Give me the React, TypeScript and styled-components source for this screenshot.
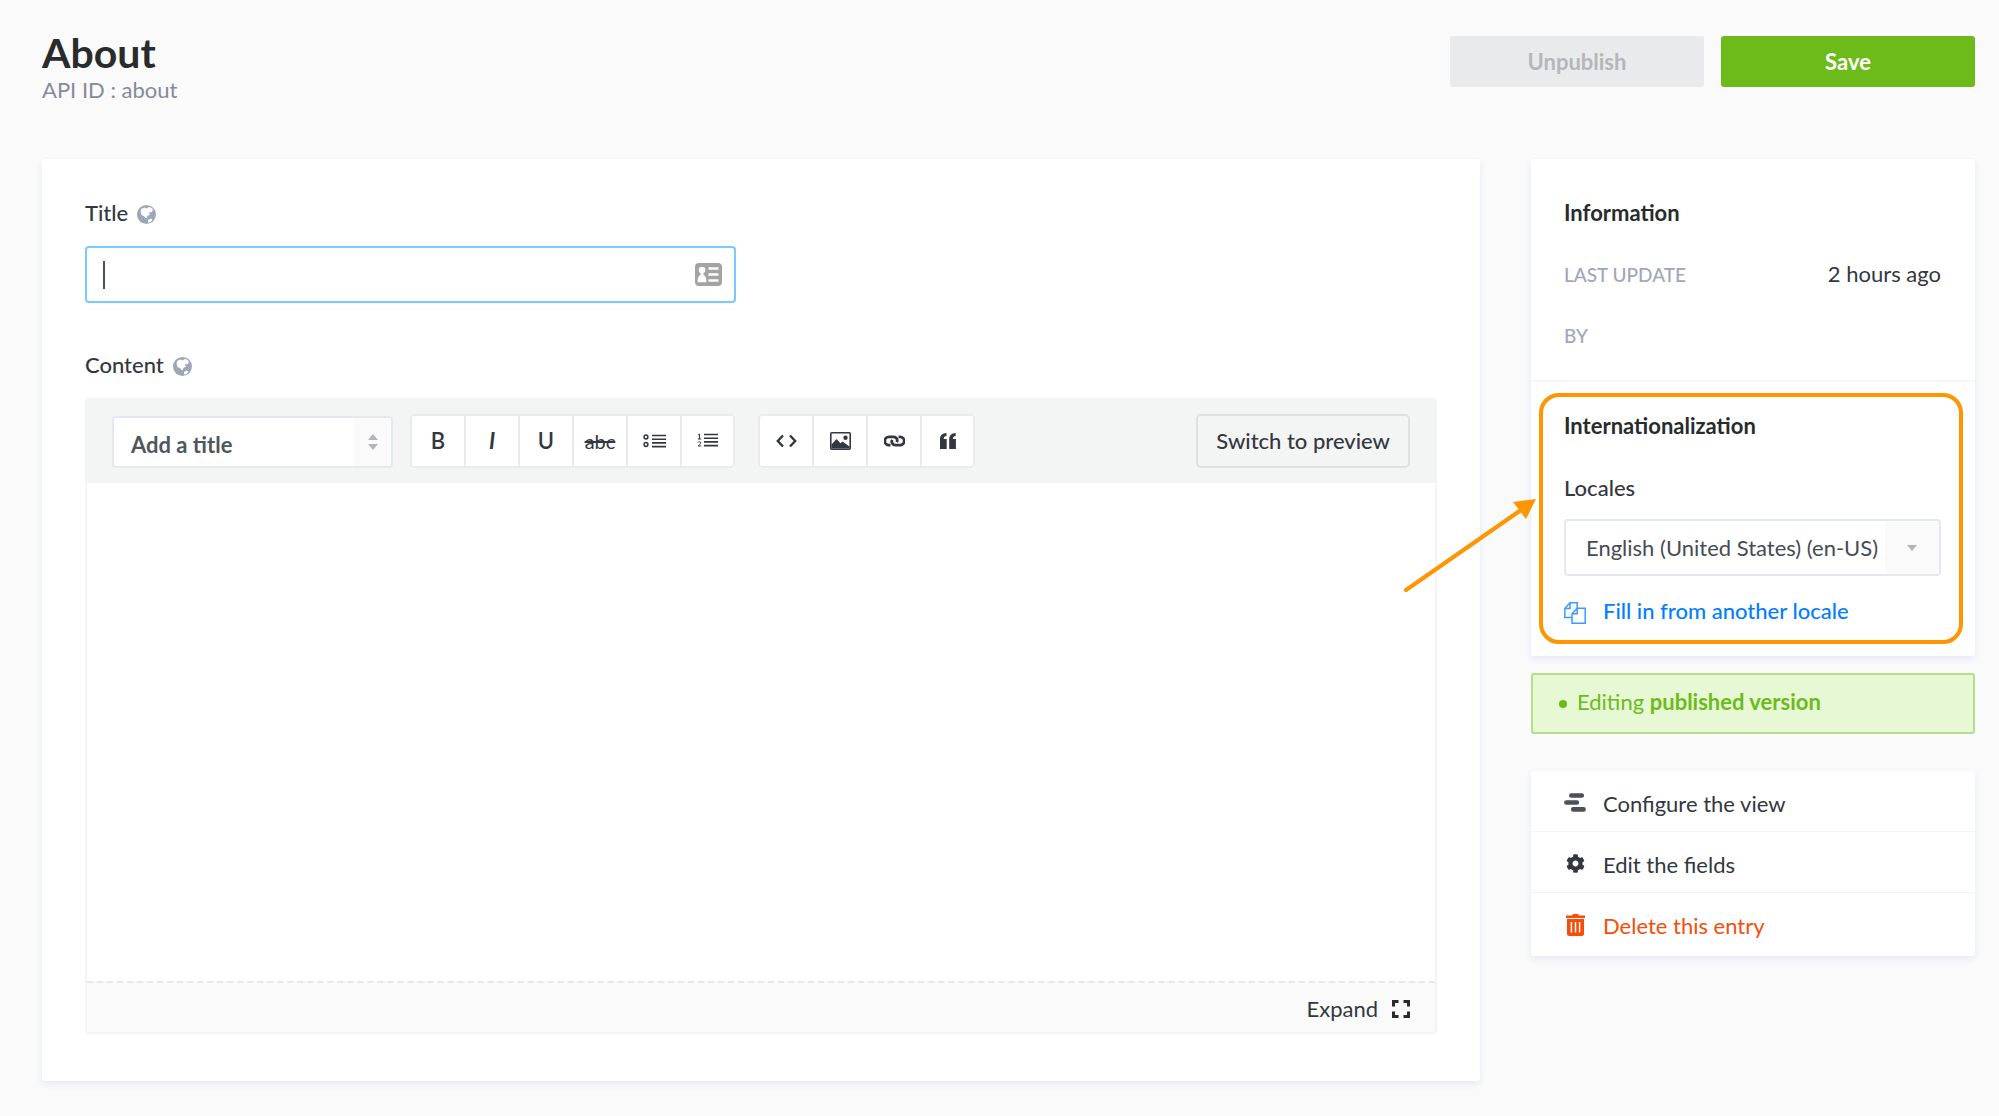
import React from "react";
import styled, { createGlobalStyle } from "styled-components";
import { FaCog } from "react-icons/fa";

const GlobalStyle = createGlobalStyle`
  *, *::before, *::after { box-sizing: border-box; }
  body {
    margin: 0;
    background: #fafafb;
    color: #333740;
    font-family: Lato, "Open Sans", sans-serif;
    font-size: 22px;
    line-height: 26px;
  }
  button, input, select, textarea { font: inherit; color: inherit; margin: 0; }
  h1, h2, p, ul, dl, dd { margin: 0; padding: 0; }
  svg { display: block; }
`;

const Page = styled.div`
  padding: 29px 24px 35px 42px;
`;

const Header = styled.header`
  display: flex;
  align-items: flex-start;
  justify-content: space-between;
`;

const PageTitle = styled.h1`
  font-size: 41px;
  line-height: 48px;
  font-weight: 700;
  color: #292b2c;
`;

const Subtitle = styled.p`
  color: #858b9a;
`;

const Actions = styled.div`
  display: flex;
  gap: 17px;
  padding-top: 7px;
`;

const ActionButton = styled.button<{ $primary?: boolean }>`
  width: 254px;
  height: 51px;
  border: 0;
  border-radius: 3px;
  font-weight: 700;
  color: ${(p) => (p.$primary ? "#ffffff" : "#b4b6ba")};
  background: ${(p) => (p.$primary ? "#6dbb1a" : "#e9eaeb")};
`;

const Columns = styled.div`
  display: grid;
  grid-template-columns: minmax(0, 1fr) 444px;
  gap: 51px;
  align-items: start;
  margin-top: 56px;
`;

const Card = styled.section`
  background: #ffffff;
  border-radius: 3px;
  box-shadow: 0 3px 7px #e3e9f3;
`;

const FormCard = styled(Card)`
  display: flex;
  flex-direction: column;
  gap: 49px;
  padding: 41px 43px 47px;
`;

const FieldRow = styled.div`
  display: grid;
  grid-template-columns: 1fr 1fr;
  column-gap: 51px;
`;

const Field = styled.div`
  display: flex;
  flex-direction: column;
  gap: 20px;
`;

const FieldLabel = styled.label`
  display: flex;
  align-items: center;
  gap: 9px;
  font-weight: 500;

  svg { margin-top: 3px; }
`;

const InputBox = styled.div`
  display: flex;
  align-items: center;
  height: 57px;
  padding: 0 12px 0 16px;
  border: 2px solid #78caff;
  border-radius: 4px;
`;

const TextInput = styled.input`
  flex: 1;
  min-width: 0;
  height: 100%;
  padding: 0;
  border: 0;
  outline: 0;
  background: transparent;
  caret-color: transparent;
`;

const Caret = styled.span`
  width: 2px;
  height: 28px;
  background: #4b515a;
`;

const Editor = styled.div`
  border: 2px solid #f3f4f4;
  border-radius: 4px;
  overflow: hidden;
`;

const Toolbar = styled.div`
  display: flex;
  align-items: flex-start;
  height: 83px;
  padding: 14px 25px 0;
  background: #f3f4f4;
`;

const SelectBox = styled.div<{ $wide?: boolean }>`
  position: relative;
  display: flex;
  height: ${(p) => (p.$wide ? "57px" : "52px")};
  width: ${(p) => (p.$wide ? "100%" : "281px")};
  margin-top: ${(p) => (p.$wide ? "0" : "2px")};
  border: 2px solid #e3e9f3;
  border-radius: 4px;
  background: #ffffff;
  overflow: hidden;
`;

const Select = styled.select<{ $wide?: boolean }>`
  appearance: none;
  width: 100%;
  border: 0;
  outline: 0;
  background: transparent;
  padding: ${(p) => (p.$wide ? "0 56px 0 20px" : "6px 40px 0 17px")};
  font-weight: ${(p) => (p.$wide ? 400 : 700)};
  color: ${(p) => (p.$wide ? "#464b55" : "#50565e")};
`;

const Arrows = styled.span<{ $wide?: boolean }>`
  position: absolute;
  inset: 0 0 0 auto;
  width: ${(p) => (p.$wide ? "54px" : "37px")};
  display: flex;
  flex-direction: column;
  align-items: center;
  justify-content: center;
  gap: 4px;
  background: #fafafb;
  color: #b3b5b9;
  pointer-events: none;
`;

const ButtonGroup = styled.div`
  display: flex;
  height: 54px;
  margin-left: 17px;
  border: 2px solid #e9eaea;
  border-radius: 5px;
  background: #ffffff;
  overflow: hidden;

  & + & { margin-left: 23px; }
`;

const ToolButton = styled.button`
  display: flex;
  align-items: center;
  justify-content: center;
  width: 54px;
  padding: 0;
  border: 0;
  border-right: 2px solid #e9eaea;
  background: #ffffff;
  font-weight: 600;

  &:last-child { border-right: 0; width: 51px; }
`;

const Strike = styled.s`
  font-size: 20px;
  font-weight: 400;
  text-decoration-thickness: 2px;
`;

const Italic = styled.i`
  font-weight: 700;
`;

const PreviewButton = styled.button`
  height: 54px;
  margin-left: auto;
  padding: 0 18px;
  border: 2px solid #dfe0e1;
  border-radius: 5px;
  background: transparent;
  font-weight: 500;
  color: #333740;
`;

const EditorArea = styled.textarea`
  display: block;
  width: 100%;
  height: 498px;
  padding: 20px;
  border: 0;
  outline: 0;
  resize: none;
`;

const EditorFooter = styled.div`
  display: flex;
  justify-content: flex-end;
  height: 51px;
  padding: 2px 25px 0;
  border-top: 2px dashed #e6e7e8;
  background: #fafafb;
`;

const ExpandButton = styled.button`
  display: flex;
  align-items: center;
  gap: 14px;
  padding: 0;
  border: 0;
  background: none;
`;

const Sidebar = styled.aside`
  display: flex;
  flex-direction: column;
`;

const PanelSection = styled.div<{ $divided?: boolean }>`
  position: relative;
  display: flex;
  flex-direction: column;
  gap: ${(p) => (p.$divided ? "36px" : "35px")};
  padding: ${(p) => (p.$divided ? "31px 34px 32px 33px" : "41px 34px 32px 33px")};
  border-top: ${(p) => (p.$divided ? "2px solid #f6f6f6" : "0")};
`;

const PanelTitle = styled.h2`
  font-size: 22px;
  line-height: 26px;
  font-weight: 700;
  color: #292b2c;
`;

const Details = styled.dl`
  display: flex;
  flex-direction: column;
  gap: 35px;
`;

const Detail = styled.div`
  display: flex;
  justify-content: space-between;
  height: 26px;
`;

const DetailName = styled.dt`
  font-size: 19px;
  font-weight: 500;
  line-height: 28px;
  color: #9ea7b8;
`;

const LocaleField = styled.div`
  display: flex;
  flex-direction: column;
  gap: 18px;
`;

const FillButton = styled.button`
  display: flex;
  align-items: center;
  gap: 17px;
  margin-top: 4px;
  padding: 0;
  border: 0;
  background: none;
  font-weight: 500;
  color: #007eff;

  svg { margin-top: 3px; }
`;

const Highlight = styled.div`
  position: absolute;
  inset: 11px 12px 12px 8px;
  border: 4px solid #ff9500;
  border-radius: 20px;
  pointer-events: none;
`;

const Pointer = styled.svg`
  position: absolute;
  right: 100%;
  top: 115px;
  margin-right: -6px;
  pointer-events: none;
`;

const Status = styled.p`
  display: flex;
  align-items: center;
  gap: 10px;
  height: 61px;
  margin-top: 17px;
  padding: 0 26px 3px;
  border: 2px solid #b5dd90;
  border-radius: 3px;
  background: #e6f8d4;
  color: #6dbb1a;

  &::before {
    content: "";
    width: 8px;
    height: 8px;
    margin-top: 3px;
    border-radius: 50%;
    background: #6dbb1a;
  }
`;

const LinkList = styled.ul`
  margin-top: 37px;
  padding: 0 0 2px;
  list-style: none;
  background: #ffffff;
  border-radius: 3px;
  box-shadow: 0 3px 7px #e3e9f3;
`;

const LinkItem = styled.li`
  height: 61px;
  border-bottom: 1px solid #f3f4f5;

  &:last-child { border-bottom: 0; }
`;

const SideLink = styled.a<{ $danger?: boolean }>`
  display: flex;
  align-items: center;
  gap: 17px;
  height: 60px;
  padding: 6px 34px 0 33px;
  text-decoration: none;
  color: ${(p) => (p.$danger ? "#f64d0a" : "#333740")};
`;

const IconSlot = styled.span`
  display: flex;
  justify-content: center;
  width: 22px;
  margin-top: -3px;
`;

const GlobeIcon = () => (
  <svg width="19" height="19" viewBox="0 0 19 19">
    <circle cx="9.5" cy="9.5" r="9.500" fill="#9ea7b8" />
    <path d="M4.200 4L7.500 2.400l2.400 1.200 2.200-1.800 3.800 2.300-.8 2.800-3.600.7 1.700 2-2.600 1.200-1.300 2.600-2.200-2.200-2.600-1.200-.9-3z" fill="#fff" />
    <path d="M11 14.800l3.300-1.300 1 1.800-2.200 1.900-2.100.3z" fill="#fff" />
  </svg>
);

const CardIcon = () => (
  <svg width="27" height="23" viewBox="0 0 27 23">
    <rect width="27" height="23" rx="4" fill="#a3a3a3" />
    <circle cx="7" cy="7" r="3.3" fill="#fff" />
    <path d="M5.600 9h2.800v3c2 .8 3 2.600 3 7.200H2.600c0-4.600 1-6.400 3-7.200z" fill="#fff" />
    <path d="M13.500 5.500h10M13.500 11.500h10M13.500 17.500h10" stroke="#fff" strokeWidth="2.600" />
  </svg>
);

const BulletIcon = () => (
  <svg width="23" height="14" viewBox="0 0 23 14" fill="none" stroke="#333740">
    <circle cx="3" cy="3" r="1.900" strokeWidth="1.500" />
    <circle cx="3" cy="10.500" r="1.900" strokeWidth="1.500" />
    <path d="M9 1.500h14M9 5.200h14M9 8.900h14M9 12.600h14" strokeWidth="1.600" />
  </svg>
);

const NumberIcon = () => (
  <svg width="21" height="16" viewBox="0 0 21 16" fill="none" stroke="#333740">
    <path d="M1 2l1.500-.9v4.900M.8 6h3.400" strokeWidth="1" />
    <path d="M.8 9.600c.5-1.300 2.900-1.200 2.900.3 0 1.100-1.700 1.900-2.700 3.100h3.200" strokeWidth="1" />
    <path d="M7 1.500h14M7 5.200h14M7 8.900h14M7 12.600h14" strokeWidth="1.600" />
  </svg>
);

const CodeIcon = () => (
  <svg width="21" height="14" viewBox="0 0 21 14" fill="none" stroke="#333740" strokeWidth="2.400">
    <path d="M7 1.500L1.800 7 7 12.500M14 1.500L19.200 7 14 12.500" />
  </svg>
);

const ImageIcon = () => (
  <svg width="21" height="18" viewBox="0 0 21 18">
    <rect x=".8" y=".8" width="19.400" height="16.400" rx="1" fill="none" stroke="#333740" strokeWidth="1.600" />
    <circle cx="15.500" cy="5.700" r="2.200" fill="#333740" />
    <path d="M1.500 16.500v-4L6.500 7l4 4.200 2-1.700 7 5v2z" fill="#333740" />
  </svg>
);

const ChainIcon = () => (
  <svg width="21" height="12" viewBox="0 0 21 12" fill="none" stroke="#333740" strokeWidth="2.800">
    <path d="M6.500 10.200H5A3.900 3.900 0 0 1 5 1.800h4.500a3.700 3.700 0 0 1 3.300 5.400" />
    <path d="M14.500 1.800H16a3.900 3.900 0 0 1 0 8.400h-4.500a3.700 3.700 0 0 1-3.300-5.400" />
  </svg>
);

const QuoteIcon = () => (
  <svg width="16" height="16" viewBox="0 0 16 16" fill="#333740">
    <path d="M0 16V6.500C0 2.500 2 .3 6.500 0v3C4.500 3.300 3.700 4.200 3.700 6h3v10z" />
    <path d="M9.200 16V6.500c0-4 2-6.200 6.500-6.500v3c-2 .3-2.800 1.200-2.800 3h3v10z" />
  </svg>
);

const ExpandIcon = () => (
  <svg width="18" height="18" viewBox="0 0 18 18" fill="none" stroke="#292b2c" strokeWidth="3">
    <path d="M1.500 6.500v-5h5M11.500 1.500h5v5M16.500 11.500v5h-5M6.500 16.500h-5v-5" />
  </svg>
);

const CopyIcon = () => (
  <svg width="22" height="22" viewBox="0 0 22 22" fill="none" stroke="#3d9bff" strokeWidth="1.500">
    <path d="M8 15.500H.8V6.500L6 .8h7.200v5.500M.8 6.500H6V.8" />
    <path d="M8 11.800L13.200 6.300h8v14.900H8zM8 11.800h5.200V6.300" />
  </svg>
);

const LayersIcon = () => (
  <svg width="22" height="19" viewBox="0 0 22 19" stroke="#4b515a" strokeWidth="4.600" strokeLinecap="round">
    <path d="M7.300 2.500h10.500M2.400 9.500h10.500M9.200 16.400h10.400" />
  </svg>
);

const TrashIcon = () => (
  <svg width="19" height="22" viewBox="0 0 19 22">
    <path d="M0 1.500h6L7 0h5l1 1.500h6V4H0z" fill="#f64d0a" />
    <path d="M1 5h17v14.500a2.500 2.500 0 0 1-2.500 2.500h-12A2.500 2.500 0 0 1 1 19.500z" fill="#f64d0a" />
    <path d="M5.400 8v10.500M9.500 8v10.500M13.600 8v10.500" stroke="#fff" strokeWidth="1.500" />
  </svg>
);

const UpTriangle = () => (
  <svg width="10" height="6" viewBox="0 0 10 6" fill="currentColor"><path d="M0 6l5-6 5 6z" /></svg>
);

const DownTriangle = () => (
  <svg width="10" height="6" viewBox="0 0 10 6" fill="currentColor"><path d="M0 0h10L5 6z" /></svg>
);

const textTools = [
  { name: "Bold", icon: "B" },
  { name: "Italic", icon: <Italic>I</Italic> },
  { name: "Underline", icon: "U" },
  { name: "Strikethrough", icon: <Strike>abc</Strike> },
  { name: "Bulleted list", icon: <BulletIcon /> },
  { name: "Numbered list", icon: <NumberIcon /> },
];

const insertTools = [
  { name: "Code", icon: <CodeIcon /> },
  { name: "Image", icon: <ImageIcon /> },
  { name: "Link", icon: <ChainIcon /> },
  { name: "Quote", icon: <QuoteIcon /> },
];

const links = [
  { text: "Configure the view", icon: <LayersIcon />, danger: false },
  { text: "Edit the fields", icon: <FaCog size={19} />, danger: false },
  { text: "Delete this entry", icon: <TrashIcon />, danger: true },
];

export default function App() {
  return (
    <>
      <GlobalStyle />
      <Page>
        <Header>
          <div>
            <PageTitle>About</PageTitle>
            <Subtitle>API ID : about</Subtitle>
          </div>
          <Actions>
            <ActionButton disabled>Unpublish</ActionButton>
            <ActionButton $primary>Save</ActionButton>
          </Actions>
        </Header>

        <Columns>
          <FormCard>
            <FieldRow>
              <Field>
                <FieldLabel htmlFor="title">
                  Title <GlobeIcon />
                </FieldLabel>
                <InputBox>
                  <Caret />
                  <TextInput id="title" type="text" />
                  <CardIcon />
                </InputBox>
              </Field>
            </FieldRow>

            <Field>
              <FieldLabel htmlFor="content">
                Content <GlobeIcon />
              </FieldLabel>
              <Editor>
                <Toolbar>
                  <SelectBox>
                    <Select aria-label="Heading level">
                      <option>Add a title</option>
                    </Select>
                    <Arrows>
                      <UpTriangle />
                      <DownTriangle />
                    </Arrows>
                  </SelectBox>
                  {[textTools, insertTools].map((tools, i) => (
                    <ButtonGroup key={i}>
                      {tools.map((tool) => (
                        <ToolButton key={tool.name} type="button" aria-label={tool.name}>
                          {tool.icon}
                        </ToolButton>
                      ))}
                    </ButtonGroup>
                  ))}
                  <PreviewButton type="button">Switch to preview</PreviewButton>
                </Toolbar>
                <EditorArea id="content" />
                <EditorFooter>
                  <ExpandButton type="button">
                    Expand <ExpandIcon />
                  </ExpandButton>
                </EditorFooter>
              </Editor>
            </Field>
          </FormCard>

          <Sidebar>
            <Card>
              <PanelSection>
                <PanelTitle>Information</PanelTitle>
                <Details>
                  <Detail>
                    <DetailName>LAST UPDATE</DetailName>
                    <dd>2 hours ago</dd>
                  </Detail>
                  <Detail>
                    <DetailName>BY</DetailName>
                  </Detail>
                </Details>
              </PanelSection>
              <PanelSection $divided>
                <PanelTitle>Internationalization</PanelTitle>
                <LocaleField>
                  <FieldLabel htmlFor="locale">Locales</FieldLabel>
                  <SelectBox $wide>
                    <Select id="locale" $wide>
                      <option>English (United States) (en-US)</option>
                    </Select>
                    <Arrows $wide>
                      <DownTriangle />
                    </Arrows>
                  </SelectBox>
                  <FillButton type="button">
                    <CopyIcon /> Fill in from another locale
                  </FillButton>
                </LocaleField>
                <Highlight />
                <Pointer width="134" height="96" viewBox="0 0 134 96">
                  <path d="M3 93L118 13" stroke="#ff9500" strokeWidth="4" strokeLinecap="round" />
                  <path d="M133 2L110 5l13 17z" fill="#ff9500" />
                </Pointer>
              </PanelSection>
            </Card>

            <Status>
              <span>
                Editing <b>published version</b>
              </span>
            </Status>

            <LinkList>
              {links.map((link) => (
                <LinkItem key={link.text}>
                  <SideLink href="#" $danger={link.danger}>
                    <IconSlot>{link.icon}</IconSlot>
                    {link.text}
                  </SideLink>
                </LinkItem>
              ))}
            </LinkList>
          </Sidebar>
        </Columns>
      </Page>
    </>
  );
}
